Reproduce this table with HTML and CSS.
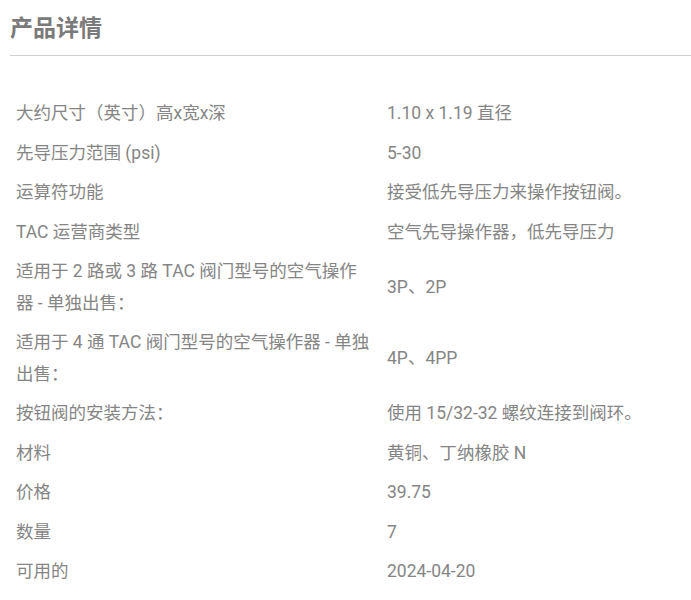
FILE: index.html
```html
<!DOCTYPE html>
<html lang="zh-CN">
<head>
  <meta charset="UTF-8" />
  <title>产品详情</title>
  <link rel="stylesheet" href="styles.css">
</head>
<body>
  <div class="details">
    <h2 class="details-title">产品详情</h2>

    <div class="spec-list">
      <div class="spec-label">大约尺寸（英寸）高x宽x深</div>
      <div class="spec-value">1.10 x 1.19 直径</div>

      <div class="spec-label">先导压力范围 (psi)</div>
      <div class="spec-value">5-30</div>

      <div class="spec-label">运算符功能</div>
      <div class="spec-value">接受低先导压力来操作按钮阀。</div>

      <div class="spec-label">TAC 运营商类型</div>
      <div class="spec-value">空气先导操作器，低先导压力</div>

      <div class="spec-label">适用于 2 路或 3 路 TAC 阀门型号的空气操作器 - 单独出售：</div>
      <div class="spec-value">3P、2P</div>

      <div class="spec-label">适用于 4 通 TAC 阀门型号的空气操作器 - 单独出售：</div>
      <div class="spec-value">4P、4PP</div>

      <div class="spec-label">按钮阀的安装方法：</div>
      <div class="spec-value">使用 15/32-32 螺纹连接到阀环。</div>

      <div class="spec-label">材料</div>
      <div class="spec-value">黄铜、丁纳橡胶 N</div>

      <div class="spec-label">价格</div>
      <div class="spec-value">39.75</div>

      <div class="spec-label">数量</div>
      <div class="spec-value">7</div>

      <div class="spec-label">可用的</div>
      <div class="spec-value">2024-04-20</div>
    </div>
  </div>
</body>
</html>
```

FILE: styles.css
```css
body {
  margin: 0;
  font-family: Roboto, "Noto Sans CJK SC", sans-serif;
  color: #858585;
  background: #fff;
}

.details {
  padding-left: 10px;
}

.details-title {
  margin: 14px 0 0;
  padding-bottom: 11px;
  font-size: 23px;
  line-height: 30px;
  font-weight: bold;
  color: #7a7a7a;
  border-bottom: 1px solid #d0d0d0;
}

.spec-list {
  display: grid;
  grid-template-columns: 371px 1fr;
  align-items: center;
  margin-top: 38px;
  font-size: 17.5px;
  line-height: 31.5px;
}

.spec-label,
.spec-value {
  padding: 4px 6px;
}

.spec-label {
  padding-right: 10px;
}
```
